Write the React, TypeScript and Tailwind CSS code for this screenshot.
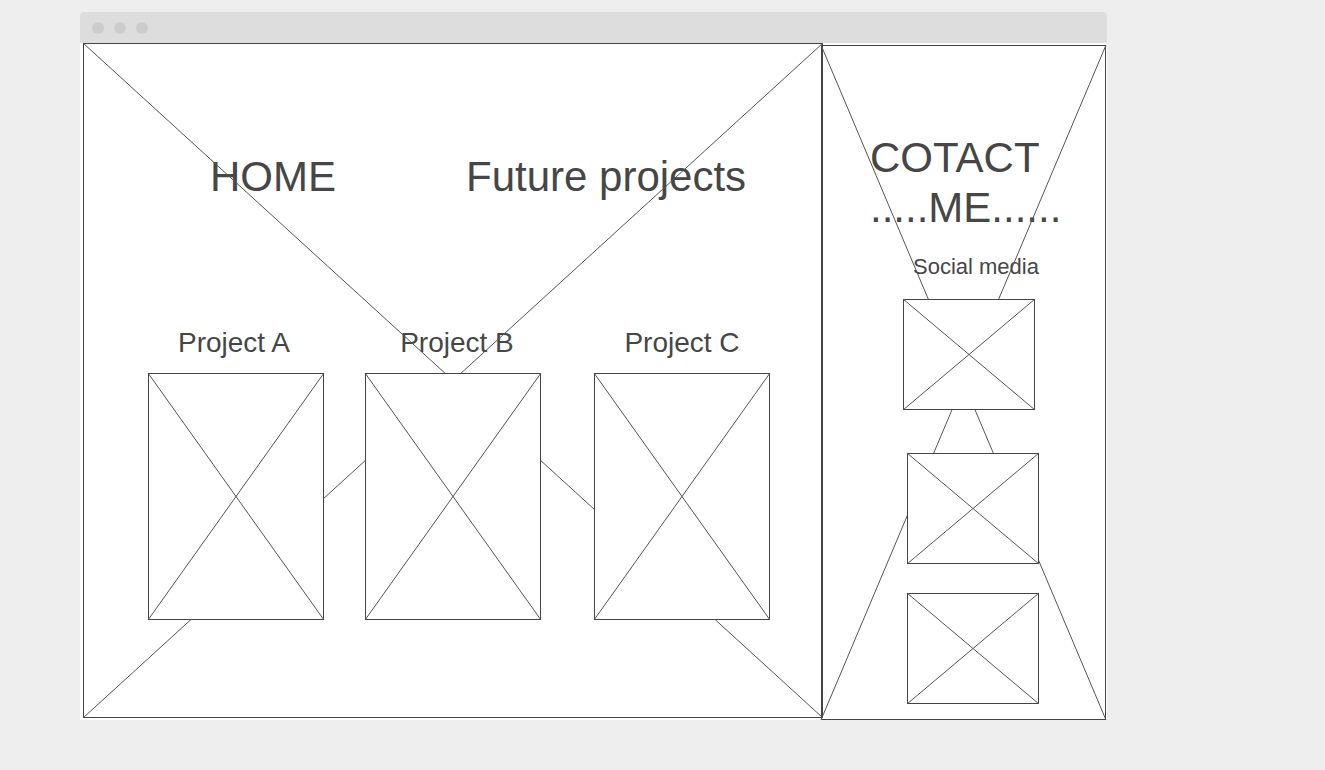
import React from 'react';

// diagonal cross that marks an image placeholder
const Cross: React.FC = () => (
  <svg className="absolute -left-px -top-px w-[calc(100%+2px)] h-[calc(100%+2px)] pointer-events-none" overflow="visible">
    <line x1="0" y1="0" x2="100%" y2="100%" stroke="#555" strokeWidth="1" />
    <line x1="100%" y1="0" x2="0" y2="100%" stroke="#555" strokeWidth="1" />
  </svg>
);

const ImageBox: React.FC<{ className?: string }> = ({ className = '' }) => (
  <div className={`relative bg-white border border-[#444] ${className}`}>
    <Cross />
  </div>
);

const projects = [
  { name: 'Project A', gap: '', label: 'pr-[4px]' },
  { name: 'Project B', gap: 'ml-[41px]', label: 'pl-[8px]' },
  { name: 'Project C', gap: 'ml-[53px]', label: '' },
];

export default function App() {
  return (
    <div className="min-h-[770px] w-full bg-[#eeeeee] pt-[12px] font-['Liberation_Sans',Arial,sans-serif] text-[#464646]">
      <div className="ml-[80px] w-[1027px] bg-white rounded-t-[4px] overflow-hidden">
        {/* window title bar */}
        <div className="h-[31px] bg-[#dddddd] flex items-center gap-[10px] pl-[12px]">
          <span className="w-3 h-3 rounded-full bg-[#cccccc]" />
          <span className="w-3 h-3 rounded-full bg-[#cccccc]" />
          <span className="w-3 h-3 rounded-full bg-[#cccccc]" />
        </div>

        <div className="flex items-start">
          {/* main panel */}
          <div className="relative ml-[3px] w-[740px] h-[675px] border border-[#444] shrink-0">
            <Cross />
            <div className="flex pt-[109px] pl-[126px] text-[42px] leading-[48px]">
              <span className="w-[256px]">HOME</span>
              <span>Future projects</span>
            </div>
            <div className="flex mt-[126px] pl-[64px]">
              {projects.map(p => (
                <div key={p.name} className={`w-[176px] flex flex-col ${p.gap}`}>
                  <div className={`text-[28px] leading-[32px] text-center whitespace-nowrap ${p.label}`}>{p.name}</div>
                  <ImageBox className="mt-[14px] w-[176px] h-[247px]" />
                </div>
              ))}
            </div>
          </div>

          {/* contact panel */}
          <div className="relative -ml-[2px] mt-[2px] w-[285px] h-[675px] border border-[#444] shrink-0">
            <Cross />
            <div className="pt-[87px] pl-[48px] text-[42px] leading-[50px] whitespace-nowrap">
              <div>COTACT</div>
              <div>.....ME......</div>
            </div>
            <div className="mt-[21px] pl-[91px] text-[22px] leading-[26px]">Social media</div>
            <ImageBox className="mt-[19px] ml-[81px] w-[132px] h-[111px]" />
            <ImageBox className="mt-[43px] ml-[85px] w-[132px] h-[111px]" />
            <ImageBox className="mt-[29px] ml-[85px] w-[132px] h-[111px]" />
          </div>
        </div>
      </div>
    </div>
  );
}
